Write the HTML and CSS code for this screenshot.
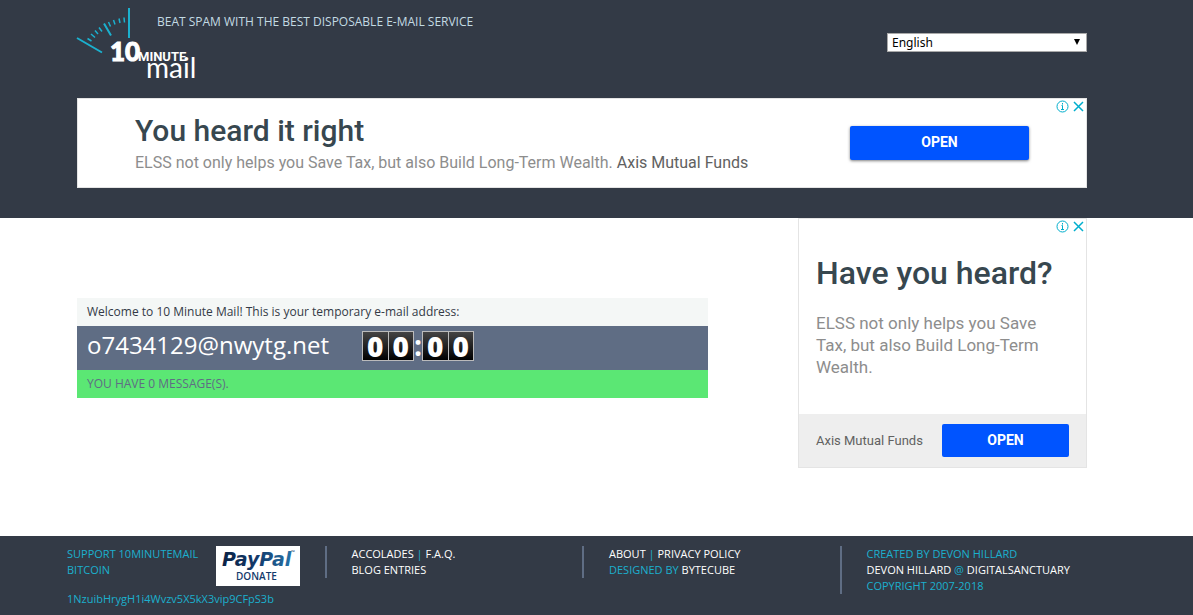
FILE: index.html
```html
<!DOCTYPE html>
<html lang="en">
<head>
  <meta charset="UTF-8">
  <meta name="viewport" content="width=device-width, initial-scale=1.0">
  <title>10 Minute Mail</title>
  <link rel="stylesheet" href="styles.css">
</head>
<body>
  <header class="header">
    <div class="container">
      <div class="top">
        <a href="#" class="logo" aria-label="10 Minute Mail">
          <svg width="120" height="74" viewBox="0 0 120 74">
            <g stroke="#1bb0ce" stroke-width="2" fill="none">
              <path d="M52 0v30M0 30l25 14.500M27 15.500l7 12"/>
              <path stroke-width="1.500" d="M10.500 30.500l4 2.500M14 26l4 3.500M18 22.500l3 3.500M22 19.500l3 4M31.500 14l2 4.500M36.500 12l1.500 4.500M42 10.500l1 4.500M47 9.500l.5 5"/>
            </g>
            <text class="logo-ten" x="33" y="53">10</text>
            <text class="logo-minute" x="61" y="53">MINUTE</text>
            <text class="logo-mail" x="69" y="70">mail</text>
          </svg>
        </a>
        <p class="tagline">BEAT SPAM WITH THE BEST DISPOSABLE E-MAIL SERVICE</p>
        <div class="language">
          <select aria-label="Language">
            <option>English</option>
            <option>Deutsch</option>
            <option>Français</option>
          </select>
        </div>
      </div>

      <!-- top banner -->
      <section class="ad banner">
        <div class="banner-text">
          <h2>You heard it right</h2>
          <p>ELSS not only helps you Save Tax, but also Build Long-Term Wealth. <a href="#">Axis Mutual Funds</a></p>
        </div>
        <button class="open">OPEN</button>
        <div class="ad-choices">
          <svg width="13" height="13" viewBox="0 0 13 13"><circle cx="6.500" cy="6.500" r="5.500"/><path d="M6.500 3v1.500M5.500 5.500h1v4M5 9.500h3"/></svg>
          <svg width="13" height="13" viewBox="0 0 13 13"><path class="cross" d="M2 2l9 9M11 2l-9 9"/></svg>
        </div>
      </section>
    </div>
  </header>

  <main class="main">
    <div class="container columns">
      <section class="mailbox">
        <p class="welcome">Welcome to 10 Minute Mail! This is your temporary e-mail address:</p>
        <div class="address">
          <span class="email">o7434129@nwytg.net</span>
          <div class="clock">
            <span class="digits"><b>0</b><b>0</b></span>
            <span class="colon">:</span>
            <span class="digits"><b>0</b><b>0</b></span>
          </div>
        </div>
        <p class="messages">YOU HAVE 0 MESSAGE(S).</p>
      </section>

      <!-- side ad -->
      <aside class="ad side">
        <div class="side-text">
          <h2>Have you heard?</h2>
          <p>ELSS not only helps you Save Tax, but also Build Long-Term Wealth.</p>
        </div>
        <div class="side-bottom">
          <a href="#">Axis Mutual Funds</a>
          <button class="open">OPEN</button>
        </div>
        <div class="ad-choices">
          <svg width="13" height="13" viewBox="0 0 13 13"><circle cx="6.500" cy="6.500" r="5.500"/><path d="M6.500 3v1.500M5.500 5.500h1v4M5 9.500h3"/></svg>
          <svg width="13" height="13" viewBox="0 0 13 13"><path class="cross" d="M2 2l9 9M11 2l-9 9"/></svg>
        </div>
      </aside>
    </div>
  </main>

  <footer class="footer">
    <div class="footer-columns">
      <div class="support">
        <div class="donate">
          <div>SUPPORT 10MINUTEMAIL<br>BITCOIN</div>
          <a href="#" class="paypal" aria-label="PayPal donate">
            <svg width="84" height="40" viewBox="0 0 84 40">
              <defs>
                <linearGradient id="blue" x1="0" x2="1">
                  <stop offset="0" stop-color="#0a2245"/>
                  <stop offset="0.5" stop-color="#123a6b"/>
                  <stop offset="1" stop-color="#2573a8"/>
                </linearGradient>
              </defs>
              <text class="paypal-name" x="6" y="20" fill="url(#blue)">PayPal</text>
              <text class="paypal-tm" x="75" y="8">™</text>
              <text class="paypal-donate" x="20" y="34">DONATE</text>
            </svg>
          </a>
        </div>
        <p>1NzuibHrygH1i4Wvzv5X5kX3vip9CFpS3b</p>
      </div>
      <div class="links">
        <a href="#">ACCOLADES</a> | <a href="#">F.A.Q.</a><br>
        <a href="#">BLOG ENTRIES</a>
      </div>
      <div class="links">
        <a href="#">ABOUT</a> | <a href="#">PRIVACY POLICY</a><br>
        DESIGNED BY <a href="#">BYTECUBE</a>
      </div>
      <div class="links">
        CREATED BY DEVON HILLARD<br>
        <a href="#">DEVON HILLARD</a> @ <a href="#">DIGITALSANCTUARY</a><br>
        COPYRIGHT 2007-2018
      </div>
    </div>
  </footer>
</body>
</html>
```
FILE: styles.css
```css
* {
  box-sizing: border-box;
}

body {
  margin: 0;
  min-height: 100vh;
  display: flex;
  flex-direction: column;
  font-family: "Open Sans", sans-serif;
  font-size: 12px;
  background-color: #fff;
}

h2, p {
  margin: 0;
}

a {
  text-decoration: none;
}

.header, .main, .footer {
  padding-right: 29px;
}

.container {
  max-width: 1010px;
  margin: 0 auto;
}

/* header */
.header {
  background-color: #333a46;
  padding-bottom: 30px;
}

.top {
  display: flex;
  align-items: flex-start;
  height: 98px;
  padding-top: 8px;
}

.logo {
  width: 120px;
  margin-right: -40px;
}

.logo svg {
  display: block;
  overflow: visible;
}

.logo text {
  fill: #fff;
  font-family: Lato, sans-serif;
}

.logo .logo-ten {
  font-size: 26px;
  font-weight: 900;
  stroke: #fff;
}

.logo .logo-minute {
  font-family: Roboto, sans-serif;
  font-size: 13px;
  font-weight: 700;
}

.logo .logo-mail {
  font-size: 28px;
}

.tagline {
  color: #c3dbe3;
  line-height: 16px;
  padding-top: 6px;
}

.language {
  position: relative;
  width: 200px;
  margin-left: auto;
  margin-top: 25px;
}

.language select {
  appearance: none;
  display: block;
  width: 100%;
  height: 19px;
  padding: 0 4px;
  border: 1px solid #a9a9a9;
  border-radius: 0;
  background-color: #fff;
  color: #000;
  font-family: "Noto Sans", sans-serif;
  font-size: 12px;
}

.language::after {
  content: "";
  position: absolute;
  top: 6px;
  right: 7px;
  border: 3px solid transparent;
  border-top: 6px solid #000;
  border-bottom: 0;
  pointer-events: none;
}

/* ads */
.ad {
  position: relative;
  border: 1px solid #e4e4e4;
  background-color: #fff;
  font-family: Roboto, sans-serif;
}

.ad h2 {
  color: #37474f;
  font-weight: 500;
}

.ad p {
  color: #8d8d8d;
}

.ad a {
  color: #616161;
}

.open {
  border: 0;
  border-radius: 2px;
  background-color: #0054ff;
  color: #fff;
  font-family: Roboto, sans-serif;
  font-size: 14px;
  font-weight: 700;
  padding: 0 0 1px;
  height: 33px;
}

.ad-choices {
  position: absolute;
  top: 1px;
  right: 1px;
  display: flex;
  gap: 3px;
}

.ad-choices svg {
  fill: none;
  stroke: #00aecd;
}

.ad-choices .cross {
  stroke-width: 1.5;
}

.banner {
  display: flex;
  justify-content: space-between;
  align-items: center;
  height: 90px;
  padding: 0 57px;
}

.banner-text {
  padding-top: 4px;
}

.banner h2 {
  font-size: 30px;
  line-height: 36px;
}

.banner p {
  font-size: 16px;
  line-height: 28px;
}

.banner .open {
  width: 179px;
  height: 34px;
  padding-bottom: 2px;
  box-shadow: 0 1px 3px rgba(0, 0, 0, 0.5);
}

/* main */
.main {
  flex-shrink: 0;
}

.columns {
  display: flex;
  justify-content: space-between;
  align-items: flex-start;
  padding-bottom: 68px;
}

.mailbox {
  width: 631px;
  margin-top: 80px;
}

.welcome, .messages {
  height: 28px;
  line-height: 28px;
  padding: 0 10px;
}

.welcome {
  background-color: #f4f7f6;
  color: #333a46;
}

.address {
  display: flex;
  align-items: flex-start;
  height: 44px;
  padding: 5px 10px;
  background-color: #5f6d84;
  color: #fff;
}

.email {
  width: 275px;
  font-size: 24px;
  line-height: 28px;
}

.clock {
  display: flex;
  height: 30px;
  font-size: 28px;
  font-weight: 700;
  line-height: 28px;
}

.digits {
  display: flex;
  width: 52px;
  border: 1px solid #bbb;
  background: linear-gradient(#444, #000);
}

.digits b {
  flex: 1;
  text-align: center;
}

.digits b + b {
  border-left: 1px solid #bbb;
}

.colon {
  width: 8px;
}

.messages {
  background-color: #5be774;
  color: #5f6d84;
}

.side {
  width: 289px;
}

.side-text {
  height: 195px;
  padding: 34px 17px 0;
}

.side h2 {
  font-size: 32px;
  line-height: 40px;
}

.side p {
  margin-top: 19px;
  font-size: 17px;
  line-height: 22px;
}

.side-bottom {
  display: flex;
  justify-content: space-between;
  align-items: center;
  height: 53px;
  padding: 0 17px;
  background-color: #eee;
  font-size: 13px;
}

.side .open {
  width: 127px;
}

/* footer */
.footer {
  flex-grow: 1;
  padding-top: 10px;
  background-color: #333a46;
  color: #1bb0ce;
  font-size: 11px;
  line-height: 16px;
}

.footer-columns {
  display: grid;
  grid-template-columns: repeat(4, 1fr);
  align-items: start;
  max-width: 1030px;
  margin: 0 auto;
}

.donate {
  display: flex;
  justify-content: space-between;
  width: 233px;
}

.paypal {
  background-color: #fff;
}

.paypal svg {
  display: block;
}

.paypal-name {
  font-family: "DejaVu Sans", sans-serif;
  font-size: 19px;
  font-weight: 700;
  font-style: italic;
}

.paypal-tm {
  font-size: 5px;
  fill: #123a6b;
}

.paypal-donate {
  font-size: 10px;
  font-weight: 600;
  fill: #123a6b;
}

.support p {
  margin-top: 5px;
}

.links {
  border-left: 2px solid #5f6d84;
  padding-left: 25px;
}

.links a {
  color: #fff;
}
```
